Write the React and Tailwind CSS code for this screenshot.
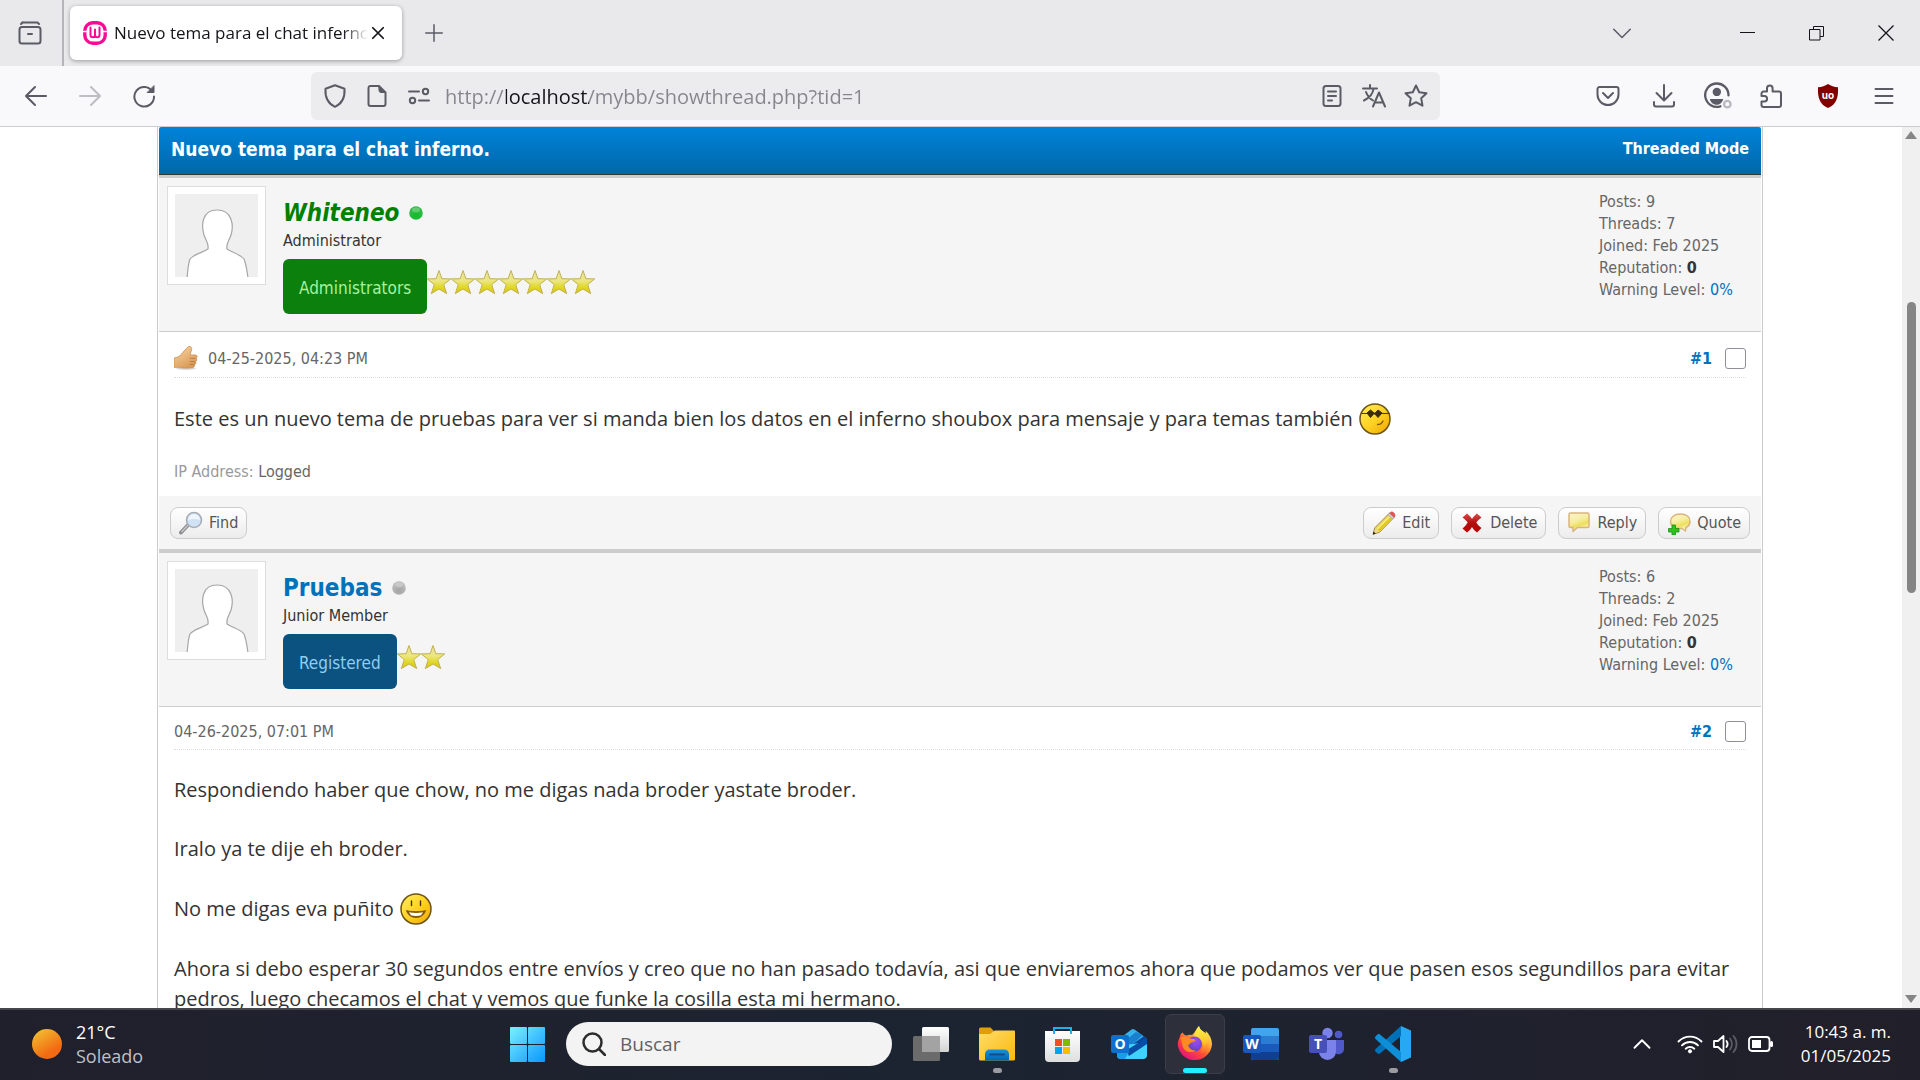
import React from "react";

/* ---------- browser icons ---------- */

const Line = ({ size = 24, className = "", sw = 2, children }) => (
  <svg
    width={size}
    height={size}
    viewBox="0 0 24 24"
    fill="none"
    stroke="currentColor"
    strokeWidth={sw}
    strokeLinecap="round"
    strokeLinejoin="round"
    className={`shrink-0 ${className}`}
    aria-hidden="true"
  >
    {children}
  </svg>
);

const RecentIcon = () => (
  <Line>
    <path d="M4.500 1.500h15l1.500 1.500" />
    <path d="M4.500 1.500L3 3" />
    <rect x="1.500" y="6" width="21" height="16.500" rx="2.500" />
    <path d="M10 13h4" />
  </Line>
);

const WampIcon = () => (
  <svg width="24" height="24" viewBox="0 0 24 24" className="shrink-0" aria-hidden="true">
    <rect x="1.800" y="1.800" width="20.400" height="20.400" rx="8" fill="none" stroke="#fa0a96" strokeWidth="3.400" />
    <path d="M0 10.500h4M20 10.500h4" stroke="#fff" strokeWidth="1.500" />
    <path
      d="M7.500 6.500v7.500a2.250 2.250 0 0 0 4.500 0V8.500M12 14a2.250 2.250 0 0 0 4.500 0V6.500"
      fill="none"
      stroke="#fa0a96"
      strokeWidth="2"
      strokeLinecap="round"
      strokeLinejoin="round"
    />
  </svg>
);

const BackIcon = () => (
  <Line>
    <path d="M22 12H2.500M11 3l-9 9 9 9" />
  </Line>
);
const ForwardIcon = () => (
  <Line>
    <path d="M2 12h19.500M13 3l9 9-9 9" />
  </Line>
);
const ReloadIcon = () => (
  <Line>
    <path d="M20.500 7.500A9.800 9.800 0 1 0 22 12.500" />
    <path d="M22 2v6.500h-6.500z" fill="currentColor" strokeWidth="1" />
  </Line>
);
const ShieldIcon = () => (
  <Line>
    <path d="M12 1.200l9.500 3.600c.6 8.500-1.800 14.500-9.500 18-7.700-3.500-10.100-9.500-9.500-18z" />
  </Line>
);
const PageIcon = () => (
  <Line>
    <path d="M5 2h9l6.500 6.500V20a2 2 0 0 1-2 2H5.500a2 2 0 0 1-2-2V4A2 2 0 0 1 5 2z" />
    <path d="M14 2l6.500 6.500H16a2 2 0 0 1-2-2z" fill="currentColor" strokeWidth="1" />
  </Line>
);
const PermissionsIcon = () => (
  <Line>
    <path d="M2 7.500h10M12 16.500h10" />
    <circle cx="18.500" cy="7.500" r="2.700" />
    <circle cx="5.500" cy="16.500" r="2.700" />
  </Line>
);
const ReaderIcon = () => (
  <Line>
    <rect x="3.500" y="2" width="17" height="20" rx="2.500" />
    <path d="M8 7.500h8M8 12h8M8 16.500h4" />
  </Line>
);
const TranslateIcon = () => (
  <Line>
    <path d="M1 4.500h14M8 1v3.500M2 16.500c5-2.500 9-6.500 9.500-12M4 8c1.500 4 3.500 6.500 7 8.500" />
    <path d="M11 22.500l6-14 6 14M13 18.500h8" />
  </Line>
);
const StarOutline = () => (
  <Line>
    <path d="M12 1.500l3.200 6.700 7.300 1-5.300 5.100 1.300 7.400-6.500-3.500-6.500 3.500 1.300-7.400L1.500 9.200l7.300-1z" />
  </Line>
);
const PocketIcon = () => (
  <Line>
    <path d="M3.500 3h17a2 2 0 0 1 2 2v5.500a10.500 10.500 0 0 1-21 0V5a2 2 0 0 1 2-2z" />
    <path d="M7 9l5 5 5-5" />
  </Line>
);
const DownloadIcon = () => (
  <Line>
    <path d="M12 1v15M4.500 9l7.500 7.500L19.500 9M2 18v2.500a2 2 0 0 0 2 2h16a2 2 0 0 0 2-2V18" />
  </Line>
);
const AccountIcon = () => (
  <Line size={28} className="-mx-1">
    <path d="M14 20.800A10 10 0 1 1 21 11.500" />
    <circle cx="11" cy="8.500" r="3.600" fill="currentColor" strokeWidth="0" />
    <path d="M5 14.500h11.500a7 7 0 0 1-2 3.800 6 6 0 0 1-9.500-3.800z" fill="currentColor" strokeWidth="0" />
    <circle cx="20" cy="19" r="2.800" stroke="#b9b9c0" />
  </Line>
);
const PuzzleIcon = () => (
  <Line>
    <path d="M7 7.500V4.200a2.800 2.800 0 0 1 5.600 0v3.300H19a2 2 0 0 1 2 2V21a2 2 0 0 1-2 2H3.500a2 2 0 0 1-2-2v-3.500h2.800a2.800 2.800 0 0 0 0-5.600H1.500V9.500a2 2 0 0 1 2-2z" />
  </Line>
);
const UblockIcon = () => (
  <svg width="24" height="24" viewBox="0 0 24 24" className="shrink-0" aria-hidden="true">
    <path d="M12 0c3 2 6 3 10 3.200C22.500 13 20.500 20.500 12 24 3.500 20.500 1.500 13 2 3.200 6 3 9 2 12 0z" fill="#800000" />
    <text x="12" y="15" textAnchor="middle" fontSize="10" fontWeight="700" fontFamily="Inter, sans-serif" fill="#fff">
      uo
    </text>
  </svg>
);
const MenuIcon = () => (
  <Line>
    <path d="M3.500 5h17M3.500 12h17M3.500 19h17" />
  </Line>
);

const IconButton = ({ label, className = "", children }) => (
  <button type="button" aria-label={label} className={`flex items-center justify-center ${className}`}>
    {children}
  </button>
);

function TabBar() {
  return (
    <div className="flex h-[66px] shrink-0 items-center bg-[#e9e9eb] text-[#5b5b66]">
      <div className="flex h-full w-[64px] shrink-0 items-center border-r-2 border-[#b4b4b9] pl-[18px]">
        <IconButton label="Pestañas recientes">
          <RecentIcon />
        </IconButton>
      </div>
      <div className="ml-[6px] flex h-[54px] w-[332px] items-center rounded-md bg-white pl-[13px] pr-[17px] text-[#15141a] shadow-[0_1px_4px_rgba(0,0,0,0.35)]">
        <WampIcon />
        <span className="ml-[7px] flex-1 overflow-hidden whitespace-nowrap text-[17px] leading-6 [mask-image:linear-gradient(to_right,black_90%,transparent)]">
          Nuevo tema para el chat inferno.
        </span>
        <IconButton label="Cerrar pestaña" className="ml-[3px]">
          <Line size={14} sw={3}>
            <path d="M3 3l18 18M21 3L3 21" />
          </Line>
        </IconButton>
      </div>
      <IconButton label="Nueva pestaña" className="ml-[23px]">
        <Line size={18} sw={2}>
          <path d="M12 1v22M1 12h22" />
        </Line>
      </IconButton>
      <div className="ml-auto flex items-center pr-[26px] text-[#15141a]">
        <IconButton label="Lista de pestañas" className="mr-[109px] text-[#5b5b66]">
          <Line size={18} sw={2}>
            <path d="M1 7l11 11L23 7" />
          </Line>
        </IconButton>
        <IconButton label="Minimizar" className="mr-[53px]">
          <svg width="16" height="16" viewBox="0 0 16 16" aria-hidden="true">
            <path d="M0 7.500h15" stroke="currentColor" />
          </svg>
        </IconButton>
        <IconButton label="Restaurar" className="mr-[53px]">
          <svg width="16" height="16" viewBox="0 0 16 16" fill="none" stroke="currentColor" aria-hidden="true">
            <path d="M.5 4.500h10.500v10.500H.5zM4.500 4.500v-3h10v10h-3.500" />
          </svg>
        </IconButton>
        <IconButton label="Cerrar">
          <svg width="16" height="16" viewBox="0 0 16 16" stroke="currentColor" strokeWidth="1.300" aria-hidden="true">
            <path d="M.5.5l15 15M15.500.5l-15 15" />
          </svg>
        </IconButton>
      </div>
    </div>
  );
}

function NavBar() {
  return (
    <div className="flex h-[61px] shrink-0 items-center border-b border-[#cccccf] bg-[#f9f9fb] text-[#5b5b66]">
      <div className="flex w-[311px] shrink-0 items-center gap-[30px] pl-6">
        <IconButton label="Atrás">
          <BackIcon />
        </IconButton>
        <IconButton label="Adelante" className="text-[#bdbdc2]">
          <ForwardIcon />
        </IconButton>
        <IconButton label="Recargar">
          <ReloadIcon />
        </IconButton>
      </div>
      <div className="flex h-12 min-w-0 flex-1 items-center gap-[18px] rounded-md bg-[#ececee] px-[12px]">
        <IconButton label="Protección">
          <ShieldIcon />
        </IconButton>
        <IconButton label="Información del sitio">
          <PageIcon />
        </IconButton>
        <IconButton label="Permisos">
          <PermissionsIcon />
        </IconButton>
        <input
          type="text"
          aria-label="Dirección"
          defaultValue="http://localhost/mybb/showthread.php?tid=1"
          className="-ml-1 min-w-0 flex-1 bg-[linear-gradient(to_right,#85858c_61px,#15141a_61px,#15141a_144px,#85858c_144px)] bg-clip-text pt-[2px] text-[20px] leading-7 text-transparent caret-[#15141a] outline-none"
        />
        <IconButton label="Vista de lectura">
          <ReaderIcon />
        </IconButton>
        <IconButton label="Traducir">
          <TranslateIcon />
        </IconButton>
        <IconButton label="Marcador">
          <StarOutline />
        </IconButton>
      </div>
      <div className="flex w-[480px] shrink-0 items-center justify-between pl-[156px] pr-6">
        <IconButton label="Pocket">
          <PocketIcon />
        </IconButton>
        <IconButton label="Descargas">
          <DownloadIcon />
        </IconButton>
        <IconButton label="Cuenta">
          <AccountIcon />
        </IconButton>
        <IconButton label="Extensiones">
          <PuzzleIcon />
        </IconButton>
        <IconButton label="uBlock Origin">
          <UblockIcon />
        </IconButton>
        <IconButton label="Menú">
          <MenuIcon />
        </IconButton>
      </div>
    </div>
  );
}

/* ---------- forum graphics ---------- */

const Avatar = () => (
  <div className="size-[99px] shrink-0 border border-[#dddddd] bg-white p-[7px]">
    <svg viewBox="0 0 83 83" className="size-full" role="img" aria-label="Avatar">
      <rect width="83" height="83" fill="#efefef" />
      <path
        d="M12 84C13 76 13 70 15 65c4-5 12-6 18-10 1-6-2-8-4-14-3-10-2-25 13-25s17 15 14 25c-2 6-5 8-4 14 6 4 13 5 17 10 2 5 3 11 4 19z"
        fill="#fff"
        stroke="#a6a6a6"
        strokeWidth="1.200"
      />
    </svg>
  </div>
);

const StatusDot = ({ online }) => (
  <svg width="14" height="14" viewBox="0 0 14 14" role="img" aria-label={online ? "Online" : "Offline"}>
    <defs>
      <radialGradient id={online ? "dotOn" : "dotOff"} cx="50%" cy="70%" r="60%">
        <stop offset="0" stopColor={online ? "#10bd28" : "#a4a4a4"} />
        <stop offset="1" stopColor={online ? "#35b84a" : "#bcbcbc"} />
      </radialGradient>
    </defs>
    <circle cx="7" cy="7" r="6.800" fill={online ? "url(#dotOn)" : "url(#dotOff)"} />
    <ellipse cx="7" cy="4" rx="4" ry="2.400" fill="#fff" opacity="0.25" />
  </svg>
);

const RankStar = () => (
  <svg width="24" height="24" viewBox="0 0 24 24" aria-hidden="true">
    <defs>
      <linearGradient id="rank" x1="0" y1="0" x2="0" y2="1">
        <stop offset="0" stopColor="#e9e2a0" />
        <stop offset="0.45" stopColor="#ece680" />
        <stop offset="0.75" stopColor="#e0d81c" />
        <stop offset="1" stopColor="#cfc022" />
      </linearGradient>
    </defs>
    <path
      d="M12 .5l2.900 8.200 8.800.2-7 5.700 3 9L12 19l-7.700 4.600 3-9-7-5.700 8.800-.2z"
      fill="url(#rank)"
      stroke="#c2b04e"
      strokeWidth="1"
      strokeLinejoin="round"
    />
  </svg>
);

const ThumbIcon = () => (
  <svg width="24" height="24" viewBox="0 0 24 24" aria-hidden="true">
    <defs>
      <linearGradient id="skin" x1="0" y1="0" x2="0.600" y2="1">
        <stop offset="0" stopColor="#fbd7a6" />
        <stop offset="1" stopColor="#d99a57" />
      </linearGradient>
    </defs>
    <ellipse cx="12" cy="22.500" rx="10" ry="1.500" fill="#000" opacity="0.150" />
    <path
      d="M0 12c3-.5 5-1 7-3.500C9.500 5.500 12 3 14 .8c1.800-1.200 4.200 0 3.600 2.800L16 9h5.500c2 .2 2.200 2.800.5 3.300 1.200.8 1 2.900-.5 3.200.9.900.5 2.700-1 2.900.5 1.500-.3 3.100-2 3.300-5 .5-9 .6-12 0-2.500-.5-4.500-.4-6.500-.4z"
      fill="url(#skin)"
      stroke="#c98f55"
      strokeWidth="0.800"
    />
    <path d="M15.500 12.300h6M15.800 15.500h5.500M15.500 18.400h5" stroke="#b97a40" strokeWidth="0.900" fill="none" />
  </svg>
);

const SmileyBase = ({ label, children }) => (
  <svg width="32" height="32" viewBox="0 0 32 32" className="inline-block shrink-0 align-middle" role="img" aria-label={label}>
    <defs>
      <linearGradient id="face" x1="0" y1="0" x2="1" y2="1">
        <stop offset="0" stopColor="#ffec5c" />
        <stop offset="0.500" stopColor="#ffd325" />
        <stop offset="1" stopColor="#f0a400" />
      </linearGradient>
    </defs>
    <circle cx="16" cy="16" r="15" fill="url(#face)" stroke="#6d5414" strokeWidth="1.500" />
    {children}
  </svg>
);
const CoolSmiley = () => (
  <SmileyBase label="Cool">
    <path d="M2.500 10.500h28" stroke="#4a3a12" strokeWidth="1" />
    <path d="M8 10l3.500-3 3.500 3 1 .3 3-3.300 4 3-4 4.500-3-3.500-1.500 0-3 3.500z" fill="#3a2a08" stroke="#3a2a08" strokeWidth="1" strokeLinejoin="round" />
    <path d="M18.500 21.500c2.500 0 4.500-1 5.500-3.500" fill="none" stroke="#8a5c08" strokeWidth="1.300" strokeLinecap="round" />
  </SmileyBase>
);
const GrinSmiley = () => (
  <SmileyBase label="Big Grin">
    <path d="M11.500 8v4.500M20.500 8v4.500" stroke="#4a3506" strokeWidth="1.400" strokeLinecap="round" />
    <path d="M6.500 17.500c3 1.500 16 1.500 19 0-1 4-4.500 7-9.500 7s-8.500-3-9.500-7z" fill="#8a5c08" stroke="#7a4d05" strokeWidth="0.800" strokeLinejoin="round" />
    <path d="M9 19.300c4.500.8 9.500.8 14 0l-2 3c-3 1-7 1-10 0z" fill="#fff" />
  </SmileyBase>
);

/* ---------- post buttons ---------- */

const FindIcon = () => (
  <svg width="24" height="24" viewBox="0 0 24 24" aria-hidden="true">
    <path d="M2 21.500l8-8.500" stroke="#8d8d92" strokeWidth="4" strokeLinecap="round" />
    <path d="M3 20.500l7-7.500" stroke="#c6c6ca" strokeWidth="1.500" strokeLinecap="round" />
    <circle cx="15" cy="9" r="7.500" fill="#cfe2f6" stroke="#a9adb5" strokeWidth="1.600" />
    <path d="M9 9c4-1.500 8-1.500 12 0a6 6 0 0 0-12 0z" fill="#eef5fd" />
  </svg>
);
const EditIcon = () => (
  <svg width="24" height="24" viewBox="0 0 24 24" aria-hidden="true">
    <path d="M1 23.300l1.800-6.500L18 1.500l4.500 4.500L7.500 21.300z" fill="#efd98e" stroke="#a98a3c" strokeWidth="1" strokeLinejoin="round" />
    <path d="M3.500 17.500L16.500 4.500l3.500 3.500L7.500 20.500z" fill="#e2c91e" />
    <path d="M4.800 18.300L17.500 5.600" stroke="#f8ef8c" strokeWidth="1.500" />
    <path d="M16 3.600l4.500 4.500 1.500-1.500-4.500-4.500z" fill="#cfd3d8" stroke="#9a9fa6" strokeWidth="0.700" />
    <path d="M17.500 2.200l4.400 4.400 1.200-1.300c1.200-2-2.200-5.300-4.200-4.600z" fill="#e25555" />
    <path d="M.8 23.500l.8-3 2.200 2.200z" fill="#222" />
  </svg>
);
const DeleteIcon = () => (
  <svg width="24" height="24" viewBox="0 0 24 24" aria-hidden="true">
    <defs>
      <linearGradient id="del" x1="0" y1="0" x2="0" y2="1">
        <stop offset="0" stopColor="#dd4a4a" />
        <stop offset="0.500" stopColor="#b01010" />
        <stop offset="1" stopColor="#c00000" />
      </linearGradient>
    </defs>
    <path
      d="M7 2.500c2 1.500 3.500 3 5 5.500 1.500-2.500 3-4 5-5.500l4.500 4c-2 1.500-3.500 3-5.200 5 1.700 2.500 3.200 4 5.200 5.500L17 21.500c-2-1.500-3.500-3-5-5.500-1.500 2.500-3 4-5 5.500L2.500 17.500c2-1.500 3.500-3.500 5.200-6-1.700-2.500-3.200-3.500-5.200-5z"
      fill="url(#del)"
    />
  </svg>
);
const BubbleGradient = () => (
  <defs>
    <linearGradient id="bubble" x1="0" y1="0" x2="0.400" y2="1">
      <stop offset="0" stopColor="#fdf6d0" />
      <stop offset="0.500" stopColor="#f6eda0" />
      <stop offset="0.750" stopColor="#ece05a" />
      <stop offset="1" stopColor="#faf3c0" />
    </linearGradient>
  </defs>
);
const ReplyIcon = () => (
  <svg width="24" height="24" viewBox="0 0 24 24" aria-hidden="true">
    <BubbleGradient />
    <path d="M3.500 2h17A1.500 1.500 0 0 1 22 3.500v11.500a1.500 1.500 0 0 1-1.500 1.500H10.500l-4.500 4v-4H3.500A1.500 1.500 0 0 1 2 15V3.500A1.500 1.500 0 0 1 3.500 2z" fill="url(#bubble)" stroke="#d9b47c" strokeWidth="1.500" strokeLinejoin="round" />
  </svg>
);
const QuoteIcon = () => (
  <svg width="24" height="24" viewBox="0 0 24 24" aria-hidden="true">
    <BubbleGradient />
    <path d="M13.500 3C20 3 23 6.500 23 10.500c0 3-2 5-4 6l-.5 3.500-3.500-2.500C8 18 3.500 15.500 3.500 10.500 3.500 6.500 7 3 13.500 3z" fill="url(#bubble)" stroke="#d9b47c" strokeWidth="1.500" strokeLinejoin="round" />
    <path d="M5 14h3.500v3.500H12V21H8.500v3H5v-3H1.500v-3.500H5z" fill="#2fc21f" stroke="#1d8f12" strokeWidth="0.800" />
  </svg>
);

const PostButton = ({ icon: Icon, children }) => (
  <button
    type="button"
    className="flex h-8 items-center gap-[6px] rounded-[8px] border border-[#cccccc] bg-gradient-to-b from-white to-[#ececec] px-2 text-base leading-5 text-[#555555]"
  >
    <Icon />
    {children}
  </button>
);

/* ---------- posts ---------- */

function Author({ name, nameClass, online, title, badge, badgeClass, stars, posts, threads }) {
  return (
    <div className="flex border-b border-[#cccccc] bg-[#f5f5f5] pb-[17px] pl-2">
      <div className="pt-2">
        <Avatar />
      </div>
      <div className="ml-[17px] flex-1 pt-[19px]">
        <div className="flex h-8 items-center gap-[10px]">
          <a href="#" className={`text-2xl leading-8 font-bold ${nameClass}`}>
            {name}
          </a>
          <StatusDot online={online} />
        </div>
        <div className="text-base leading-6 text-[#333333]">{title}</div>
        <div className="mt-[6px] flex">
          <span className={`flex h-[55px] items-center rounded-md px-4 pt-[2px] text-[17px] leading-6 ${badgeClass}`}>{badge}</span>
          <span className="flex pt-[11px]" role="img" aria-label={`${stars} estrellas`}>
            {Array.from({ length: stars }, (_, i) => (
              <RankStar key={i} />
            ))}
          </span>
        </div>
      </div>
      <div className="w-[162px] shrink-0 pt-[13px] text-base leading-[22px] text-[#666666]">
        <div>Posts: {posts}</div>
        <div>Threads: {threads}</div>
        <div>Joined: Feb 2025</div>
        <div>
          Reputation: <strong className="text-[#333333]">0</strong>
        </div>
        <div>
          Warning Level:{" "}
          <a href="#" className="text-[#0072bc]">
            0%
          </a>
        </div>
      </div>
    </div>
  );
}

function PostHead({ date, number, thumb }) {
  return (
    <div className="flex items-center border-b border-dotted border-[#dddddd] pt-[14px] pb-[7px] text-base leading-[21px]">
      {thumb && (
        <button type="button" aria-label="Me gusta" className="mr-[10px]">
          <ThumbIcon />
        </button>
      )}
      <span className="text-[#666666]">{date}</span>
      <a href="#" className="ml-auto font-bold text-[#0072bc]">
        {number}
      </a>
      <input
        type="checkbox"
        aria-label={`Seleccionar ${number}`}
        className="ml-[13px] size-[21px] appearance-none rounded-[3px] border border-[#8f8f9d] bg-white"
      />
    </div>
  );
}

function Thread() {
  return (
    <div className="mr-[139px] ml-[157px] flex-1 self-start border-x border-[#cccccc] bg-white px-px">
      <div className="flex h-12 items-center justify-between rounded-t-[2px] border-b border-[#263c30] bg-gradient-to-b from-[#0083d9] to-[#0067a9] px-3 pb-[3px] font-bold text-white">
        <h1 className="text-[19px] leading-6">Nuevo tema para el chat inferno.</h1>
        <a href="#" className="text-base leading-5">
          Threaded Mode
        </a>
      </div>

      <article className="border-t-[3px] border-[#cccccc]">
        <Author
          name="Whiteneo"
          nameClass="italic text-[#008000]"
          online
          title="Administrator"
          badge="Administrators"
          badgeClass="bg-[#0c800c] text-[#a5f3a0]"
          stars={7}
          posts={9}
          threads={7}
        />
        <div className="px-[15px]">
          <PostHead date="04-25-2025, 04:23 PM" number="#1" thumb />
          <p className="flex items-center gap-[6px] pt-[25px] font-['Open_Sans',sans-serif] text-[20px] leading-[30px] text-[#333333]">
            Este es un nuevo tema de pruebas para ver si manda bien los datos en el inferno shoubox para mensaje y para temas también
            <CoolSmiley />
          </p>
          <p className="pt-[27px] pb-[14px] text-base leading-5 text-[#999999]">
            IP Address: <span className="text-[#666666]">Logged</span>
          </p>
        </div>
        <div className="flex items-center justify-between bg-[#f5f5f5] px-[11px] pt-[11px] pb-[10px]">
          <PostButton icon={FindIcon}>Find</PostButton>
          <div className="flex gap-3">
            <PostButton icon={EditIcon}>Edit</PostButton>
            <PostButton icon={DeleteIcon}>Delete</PostButton>
            <PostButton icon={ReplyIcon}>Reply</PostButton>
            <PostButton icon={QuoteIcon}>Quote</PostButton>
          </div>
        </div>
      </article>

      <article className="border-t-4 border-[#cccccc]">
        <Author
          name="Pruebas"
          nameClass="text-[#0072bc]"
          title="Junior Member"
          badge="Registered"
          badgeClass="bg-[#0b5280] text-[#8fcdf5]"
          stars={2}
          posts={6}
          threads={2}
        />
        <div className="px-[15px]">
          <PostHead date="04-26-2025, 07:01 PM" number="#2" />
          <div className="flex flex-col gap-[29px] pt-[25px] font-['Open_Sans',sans-serif] text-[20px] leading-[30px] text-[#333333]">
            <p>Respondiendo haber que chow, no me digas nada broder yastate broder.</p>
            <p>Iralo ya te dije eh broder.</p>
            <p className="flex items-center gap-[6px]">
              No me digas eva puñito
              <GrinSmiley />
            </p>
            <p>
              Ahora si debo esperar 30 segundos entre envíos y creo que no han pasado todavía, asi que enviaremos ahora que podamos ver que
              pasen esos segundillos para evitar pedros, luego checamos el chat y vemos que funke la cosilla esta mi hermano.
            </p>
          </div>
        </div>
      </article>
    </div>
  );
}

function Scrollbar() {
  return (
    <div className="flex w-[18px] shrink-0 flex-col items-center bg-[#f0f0f0]" aria-hidden="true">
      <svg width="12" height="8" viewBox="0 0 12 8" className="mt-1 shrink-0">
        <path d="M6 0l6 8H0z" fill="#858585" />
      </svg>
      <div className="flex w-full min-h-0 flex-1 flex-col items-center">
        <div className="basis-[19%]" />
        <div className="w-[9px] basis-[34%] rounded-full bg-[#858585]" />
      </div>
      <svg width="12" height="8" viewBox="0 0 12 8" className="mb-[5px] shrink-0">
        <path d="M6 8l6-8H0z" fill="#858585" />
      </svg>
    </div>
  );
}

/* ---------- taskbar ---------- */

const AppSvg = ({ children }) => (
  <svg width="36" height="36" viewBox="0 0 36 36" aria-hidden="true">
    {children}
  </svg>
);
const Letter = ({ x, y, children }) => (
  <text x={x} y={y} textAnchor="middle" fontSize="14" fontWeight="700" fontFamily="'Open Sans', sans-serif" fill="#fff">
    {children}
  </text>
);

const WindowsLogo = () => (
  <AppSvg>
    <defs>
      <linearGradient id="win" gradientUnits="userSpaceOnUse" x1="0" y1="0" x2="36" y2="36">
        <stop offset="0" stopColor="#7df3ff" />
        <stop offset="1" stopColor="#0a96ff" />
      </linearGradient>
    </defs>
    <g fill="url(#win)">
      <rect x="1" y="1" width="17" height="17" rx="1" />
      <rect x="19" y="1" width="17" height="17" rx="1" />
      <rect x="1" y="19" width="17" height="17" rx="1" />
      <rect x="19" y="19" width="17" height="17" rx="1" />
    </g>
  </AppSvg>
);
const TaskViewLogo = () => (
  <AppSvg>
    <defs>
      <linearGradient id="tv" x1="0" y1="0" x2="0" y2="1">
        <stop offset="0" stopColor="#ffffff" />
        <stop offset="1" stopColor="#d2d2d2" />
      </linearGradient>
    </defs>
    <rect x="9" y="1" width="27" height="25" rx="1.500" fill="url(#tv)" />
    <rect x="0" y="10" width="27" height="25" rx="1.500" fill="#6b6b6b" />
    <rect x="9" y="10" width="18" height="16" fill="#a3a3a3" />
  </AppSvg>
);
const ExplorerLogo = () => (
  <AppSvg>
    <defs>
      <linearGradient id="folder" x1="0" y1="0" x2="1" y2="1">
        <stop offset="0" stopColor="#ffdc6b" />
        <stop offset="1" stopColor="#fbb80c" />
      </linearGradient>
      <linearGradient id="tray" x1="0" y1="0" x2="0" y2="1">
        <stop offset="0" stopColor="#1593dc" />
        <stop offset="1" stopColor="#0763b5" />
      </linearGradient>
    </defs>
    <path d="M0 3a1.500 1.500 0 0 1 1.500-1.500h10L15 5v8H0z" fill="#e09f06" />
    <path d="M0 8h11l5-3.500h19A1 1 0 0 1 36 5.500V33a1.500 1.500 0 0 1-1.500 1.500h-33A1.500 1.500 0 0 1 0 33z" fill="url(#folder)" />
    <path d="M6 34.500V28a4.500 4.500 0 0 1 4.500-4.500h15A4.500 4.500 0 0 1 30 28v6.500z" fill="url(#tray)" />
    <path d="M11 28.500h14" stroke="#0a4f93" strokeWidth="2" strokeLinecap="round" />
  </AppSvg>
);
const StoreLogo = () => (
  <AppSvg>
    <defs>
      <linearGradient id="bag" x1="0" y1="0" x2="0" y2="1">
        <stop offset="0" stopColor="#ffffff" />
        <stop offset="1" stopColor="#dedede" />
      </linearGradient>
    </defs>
    <path d="M0 5h35v27a4 4 0 0 1-4 4H4a4 4 0 0 1-4-4z" fill="url(#bag)" />
    <path d="M9 8V2h17v6" fill="none" stroke="#1fb0ea" strokeWidth="2" />
    <rect x="10" y="13" width="7" height="7" fill="#f25022" />
    <rect x="18" y="13" width="7" height="7" fill="#7fba00" />
    <rect x="10" y="21" width="7" height="7" fill="#00a4ef" />
    <rect x="18" y="21" width="7" height="7" fill="#ffb900" />
  </AppSvg>
);
const OutlookLogo = () => (
  <AppSvg>
    <path d="M8 13L20.500 3.500a2.500 2.500 0 0 1 3 0L35 12v8H8z" fill="#35b4ee" />
    <path d="M10 18l15-12 6.500 3L19 21z" fill="#1b7fd0" />
    <path d="M14 24L33 10l3 3v8L20 26z" fill="#04449c" />
    <path d="M7 20l29-4v13a4 4 0 0 1-4 4H10a4 4 0 0 1-4-4z" fill="#3ed3fa" />
    <path d="M15 24.500L36 11.500V18L18 30z" fill="#0a4ca5" />
    <path d="M6 26l12 0-4 7h-4a4 4 0 0 1-4-4z" fill="#1c9be8" />
    <rect x="0" y="9" width="18" height="18" rx="2" fill="#0f6fce" />
    <Letter x={9} y={23}>
      O
    </Letter>
  </AppSvg>
);
const FirefoxLogo = () => (
  <AppSvg>
    <defs>
      <linearGradient id="fox" x1="0.850" y1="0.100" x2="0.250" y2="0.950">
        <stop offset="0" stopColor="#fff44f" />
        <stop offset="0.350" stopColor="#ffa62b" />
        <stop offset="0.650" stopColor="#ff4a35" />
        <stop offset="1" stopColor="#e3167a" />
      </linearGradient>
      <linearGradient id="foxFlame" x1="0.500" y1="0" x2="0.600" y2="1">
        <stop offset="0" stopColor="#fff44f" />
        <stop offset="0.600" stopColor="#ffc52c" />
        <stop offset="1" stopColor="#ff5a3a" />
      </linearGradient>
      <radialGradient id="globe" cx="0.600" cy="0.300" r="0.800">
        <stop offset="0" stopColor="#a04cf0" />
        <stop offset="1" stopColor="#5a3fc8" />
      </radialGradient>
    </defs>
    <path
      d="M5.500 6.500C6.500 8 7.500 9 9.500 9.500 11 8.800 13 8.500 15 9c3-2.500 4-6 7-9 .5 4 4 5 6.500 7.500.3-1 .2-1.500.2-2.500 3.500 3 6.300 8 6.300 13.500A17.200 17.200 0 0 1 .8 19c0-3 .7-5.500 2.200-8.500.2-1.800 1-3 2.500-4z"
      fill="url(#fox)"
    />
    <path d="M22 0c.5 4 4 5 6.500 7.500C31 11 32 15 30.500 20c-1 3.500-4 6.500-7.500 7.500 3.500-4 4-9 1.500-12.500-2-2.500-6-3-8-5C18.500 7 19 3.500 22 0z" fill="url(#foxFlame)" />
    <circle cx="17.500" cy="18" r="7.500" fill="url(#globe)" />
    <path d="M3 12c4-2.500 7-1 10 .5 2 .8 4.500 0 5.500 1.500-.5 1.800-2.500 2-4.500 2.500-1.200 1-1.500 2-3 3 1.500 3.500 4.500 5.500 8 5-5 3.500-12 1-13.500-4.500C5 17 4.500 14 3 12z" fill="#ff8a24" />
  </AppSvg>
);
const WordLogo = () => (
  <AppSvg>
    <rect x="8" y="2" width="28" height="32" rx="2" fill="#41a5ee" />
    <path d="M8 10h28v8H8z" fill="#2b7cd3" />
    <path d="M8 18h28v8H8z" fill="#185abd" />
    <path d="M8 26h28v6a2 2 0 0 1-2 2H10a2 2 0 0 1-2-2z" fill="#103f91" />
    <rect x="0" y="9" width="18" height="18" rx="2" fill="#1858bb" />
    <Letter x={9} y={23}>
      W
    </Letter>
  </AppSvg>
);
const TeamsLogo = () => (
  <AppSvg>
    <circle cx="29.500" cy="8.500" r="3.800" fill="#5059c9" />
    <path d="M26 14h9v9a5.500 5.500 0 0 1-9 4z" fill="#5059c9" />
    <circle cx="18.500" cy="7" r="5.200" fill="#7b83eb" />
    <path d="M10 14h17v11.500a8.500 8.500 0 0 1-17 0z" fill="#7b83eb" />
    <rect x="0" y="9" width="18" height="18" rx="2" fill="#4650b8" />
    <Letter x={9} y={23}>
      T
    </Letter>
  </AppSvg>
);
const VsCodeLogo = () => (
  <AppSvg>
    <path d="M26 0l10 4.500v27L26 36l-1-8V8z" fill="#27a8f2" />
    <path d="M26 0v10L5 27.500c-.8.600-1.800.6-2.500 0l-2-2c-.7-.8-.7-1.800 0-2.500z" fill="#0071b8" />
    <path d="M26 36V26L5 8.500c-.8-.6-1.800-.6-2.500 0l-2 2c-.7.8-.7 1.800 0 2.500z" fill="#0f8ed8" />
  </AppSvg>
);

const TaskButton = ({ label, state, children }) => (
  <button
    type="button"
    aria-label={label}
    className={
      state === "active"
        ? "relative flex size-[60px] items-center justify-center rounded-md border border-[#3b3e48] bg-[#2d303a]"
        : "relative flex size-[60px] items-center justify-center"
    }
  >
    {children}
    {state === "active" && <span className="absolute bottom-0 h-[5px] w-6 rounded-full bg-[#22f0ff]" />}
    {state === "open" && <span className="absolute bottom-px h-[5px] w-[9px] rounded-full bg-[#9b9ca1]" />}
  </button>
);

function Taskbar() {
  return (
    <footer className="grid h-[72px] shrink-0 grid-cols-[1fr_auto_1fr] items-center border-t-2 border-[#45464c] bg-gradient-to-r from-[#20202c] via-[#1c2431] to-[#211f2a] pb-[2px] text-lg leading-6 text-white">
      <div className="flex items-center pl-8">
        <svg width="30" height="30" viewBox="0 0 30 30" aria-hidden="true">
          <defs>
            <linearGradient id="sun" x1="0.100" y1="0" x2="0.700" y2="1">
              <stop offset="0" stopColor="#f3c433" />
              <stop offset="0.800" stopColor="#f26a12" />
            </linearGradient>
          </defs>
          <circle cx="15" cy="15" r="15" fill="url(#sun)" />
        </svg>
        <div className="ml-[14px]">
          <div>21°C</div>
          <div className="text-[#bfc0c6]">Soleado</div>
        </div>
      </div>

      <nav className="flex items-center gap-[6px]" aria-label="Barra de tareas">
        <TaskButton label="Inicio">
          <WindowsLogo />
        </TaskButton>
        <label className="mx-[3px] flex h-11 w-[326px] items-center gap-[14px] rounded-full bg-[#f3f3f3] pl-4 text-[#2c2c2c]">
          <Line size={24} sw={2.5}>
            <circle cx="10.500" cy="10.500" r="9" />
            <path d="M17 17l6 6" />
          </Line>
          <input
            type="search"
            aria-label="Buscar"
            placeholder="Buscar"
            className="w-full min-w-0 bg-transparent text-[19px] leading-6 outline-none placeholder:text-[#616161]"
          />
        </label>
        <TaskButton label="Vista de tareas">
          <TaskViewLogo />
        </TaskButton>
        <TaskButton label="Explorador de archivos" state="open">
          <ExplorerLogo />
        </TaskButton>
        <TaskButton label="Microsoft Store">
          <StoreLogo />
        </TaskButton>
        <TaskButton label="Outlook">
          <OutlookLogo />
        </TaskButton>
        <TaskButton label="Firefox" state="active">
          <FirefoxLogo />
        </TaskButton>
        <TaskButton label="Word">
          <WordLogo />
        </TaskButton>
        <TaskButton label="Teams">
          <TeamsLogo />
        </TaskButton>
        <TaskButton label="Visual Studio Code" state="open">
          <VsCodeLogo />
        </TaskButton>
      </nav>

      <div className="flex items-center justify-end pr-[29px]">
        <IconButton label="Iconos ocultos">
          <Line size={18} sw={2.5}>
            <path d="M2 17L12 7l10 10" />
          </Line>
        </IconButton>
        <svg width="26" height="20" viewBox="0 0 26 20" fill="none" stroke="#fff" strokeWidth="1.900" strokeLinecap="round" className="ml-[26px]" role="img" aria-label="Wi-Fi">
          <path d="M1.500 7.500a16 16 0 0 1 23 0M5 11.300a11.300 11.300 0 0 1 16 0M8.700 14.700a6.300 6.300 0 0 1 8.600 0" />
          <circle cx="13" cy="17.300" r="1.600" fill="#fff" strokeWidth="1" />
        </svg>
        <svg width="26" height="20" viewBox="0 0 26 20" fill="none" stroke="#fff" strokeWidth="1.800" strokeLinecap="round" strokeLinejoin="round" className="ml-[9px]" role="img" aria-label="Volumen">
          <path d="M2 7h4l5.500-5v16L6 13H2z" />
          <path d="M14.500 7a5 5 0 0 1 0 6" />
          <path d="M18 4.500a9 9 0 0 1 0 11M21.500 2a12 12 0 0 1 0 16" stroke="#5c5d64" />
        </svg>
        <svg width="26" height="18" viewBox="0 0 26 18" fill="none" stroke="#fff" strokeWidth="1.800" className="ml-[10px]" role="img" aria-label="Batería">
          <rect x="1" y="2" width="20.500" height="14" rx="3" />
          <rect x="4" y="5" width="9" height="8" fill="#fff" stroke="none" />
          <path d="M23.500 7.500v3" strokeWidth="3" strokeLinecap="round" />
        </svg>
        <div className="ml-[27px] text-right text-[17px]">
          <div>10:43 a. m.</div>
          <div>01/05/2025</div>
        </div>
      </div>
    </footer>
  );
}

export default function App() {
  return (
    <div className="flex h-screen flex-col overflow-hidden bg-white font-['Open_Sans',sans-serif]">
      <TabBar />
      <NavBar />
      <main className="flex min-h-0 flex-1 overflow-hidden font-['DejaVu_Sans_Condensed','DejaVu_Sans',sans-serif]">
        <Thread />
        <Scrollbar />
      </main>
      <Taskbar />
    </div>
  );
}
